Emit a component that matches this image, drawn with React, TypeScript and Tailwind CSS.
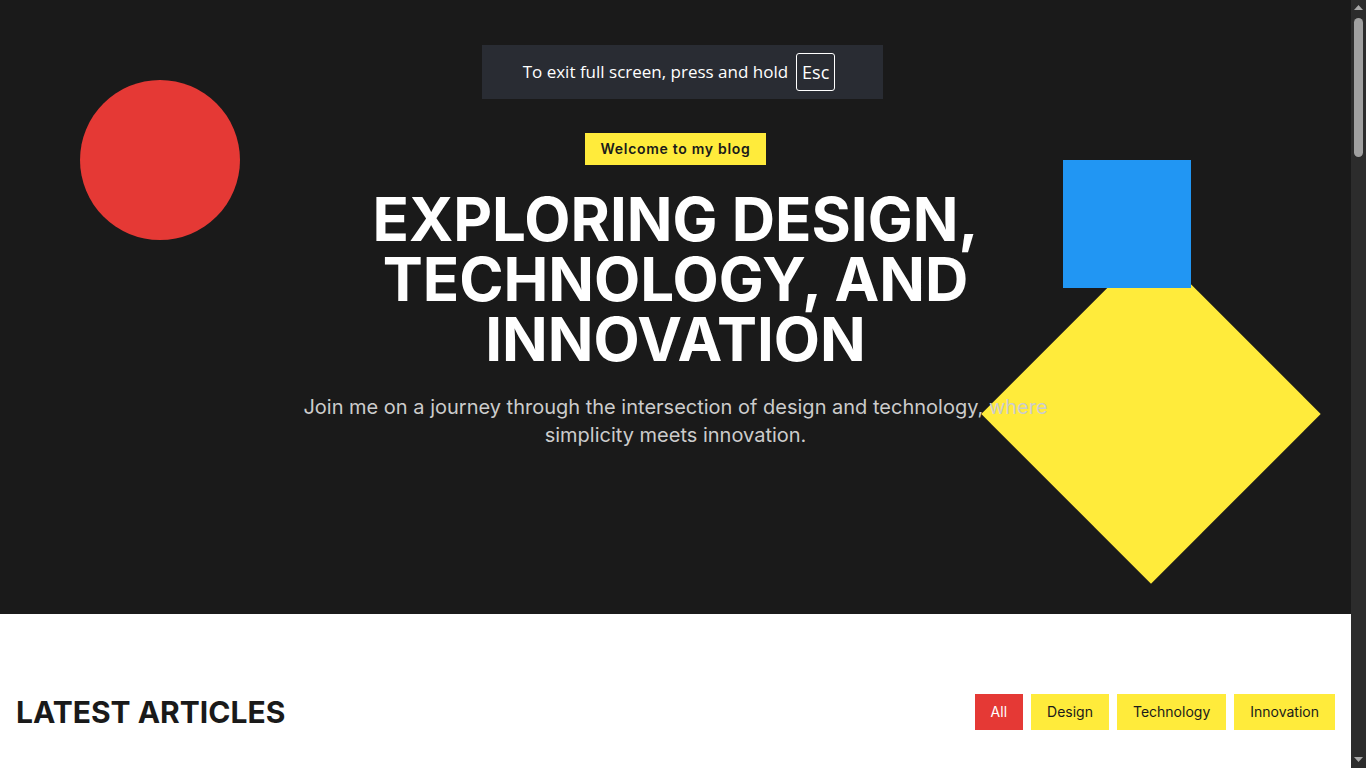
const articles = [
  { tag: "Design", title: "The Power of Simple Shapes", date: "March 12, 2024", color: "bg-[#e53935]" },
  { tag: "Technology", title: "Building Fast Interfaces", date: "March 5, 2024", color: "bg-[#2196f3]" },
  { tag: "Innovation", title: "Ideas That Change Products", date: "February 27, 2024", color: "bg-[#ffeb3b]" },
  { tag: "Design", title: "Color Theory for Developers", date: "February 20, 2024", color: "bg-[#2196f3]" },
  { tag: "Technology", title: "A Guide to Modern CSS", date: "February 13, 2024", color: "bg-[#ffeb3b]" },
  { tag: "Innovation", title: "Prototyping in a Weekend", date: "February 6, 2024", color: "bg-[#e53935]" },
  { tag: "Design", title: "Grids, Rhythm and Space", date: "January 30, 2024", color: "bg-[#ffeb3b]" },
  { tag: "Technology", title: "Why Type Systems Matter", date: "January 23, 2024", color: "bg-[#e53935]" },
  { tag: "Innovation", title: "Small Teams, Big Results", date: "January 16, 2024", color: "bg-[#2196f3]" },
];

const filters = ["All", "Design", "Technology", "Innovation"];

const App = () => {
  return (
    <div className="flex items-start bg-white font-['Inter','Liberation_Sans',sans-serif] text-[#1a1a1a]">
      <main className="min-w-0 flex-1">
        {/* hero */}
        <section className="relative h-[614px] overflow-hidden bg-[#1a1a1a] pt-[133px]">
          <div className="absolute left-[80px] top-[80px] h-[160px] w-[160px] rounded-full bg-[#e53935]" />
          <div className="absolute bottom-[80px] right-[80px] h-[240px] w-[240px] rotate-45 bg-[#ffeb3b]" />
          <div className="absolute right-[160px] top-[160px] h-[128px] w-[128px] bg-[#2196f3]" />

          <div className="flex flex-col items-center text-center">
            <span className="bg-[#ffeb3b] px-4 py-1.5 text-sm font-semibold tracking-wider text-[#1a1a1a]">
              Welcome to my blog
            </span>
            <h1 className="mt-6 max-w-3xl text-6xl leading-none font-bold text-white">
              EXPLORING DESIGN, TECHNOLOGY, AND INNOVATION
            </h1>
            <p className="relative mt-6 max-w-3xl text-xl leading-7 text-[#cccccc]">
              Join me on a journey through the intersection of design and technology, where simplicity meets
              innovation.
            </p>
          </div>

          {/* fullscreen notice */}
          <div className="absolute left-[482px] top-[45px] flex h-[54px] w-[401px] items-center justify-center gap-2 bg-[#292c33] pr-[7px] font-['Open_Sans','Noto_Sans',sans-serif] text-[17px] text-white">
            <span>To exit full screen, press and hold</span>
            <span className="flex h-[38px] items-center rounded-[3px] border border-white px-[5px] text-[18px]">
              Esc
            </span>
          </div>
        </section>

        {/* articles */}
        <section className="px-4 py-20">
          <div className="flex items-center justify-between">
            <h2 className="text-3xl font-bold">LATEST ARTICLES</h2>
            <div className="flex gap-2">
              {filters.map((f, i) => (
                <button
                  key={f}
                  className={
                    i === 0
                      ? "bg-[#e53935] px-4 py-2 text-sm text-white"
                      : "bg-[#ffeb3b] px-4 py-2 text-sm text-[#1a1a1a]"
                  }
                >
                  {f}
                </button>
              ))}
            </div>
          </div>

          <div className="mt-12 grid grid-cols-3 gap-8">
            {articles.map((a, index) => (
              <div key={index} className="border-2 border-[#1a1a1a]">
                <div className={`h-[260px] ${a.color}`} />
                <div className="p-6">
                  <span className="bg-[#1a1a1a] px-3 py-1 text-xs text-white">{a.tag}</span>
                  <h3 className="mt-4 text-2xl font-bold">{a.title}</h3>
                  <p className="mt-2 text-sm text-gray-500">{a.date}</p>
                  <p className="mt-4 text-base text-gray-700">
                    A short look at how simple ideas shape the way we build and design things every day.
                  </p>
                  <button className="mt-6 bg-[#1a1a1a] px-4 py-2 text-sm text-white">Read more</button>
                </div>
              </div>
            ))}
          </div>
        </section>

        {/* newsletter */}
        <section className="bg-[#ffeb3b] px-4 py-24 text-center">
          <h2 className="text-4xl font-bold">STAY IN THE LOOP</h2>
          <p className="mt-4 text-lg">Get new articles straight to your inbox.</p>
          <div className="mt-8 flex justify-center gap-2">
            <input className="w-[320px] border-2 border-[#1a1a1a] bg-white px-4 py-2" placeholder="Your email" />
            <button className="bg-[#1a1a1a] px-6 py-2 text-white">Subscribe</button>
          </div>
        </section>

        <footer className="bg-[#1a1a1a] px-4 py-20 text-center text-sm text-gray-400">
          © 2024 My Blog. All rights reserved.
        </footer>
      </main>

      {/* scrollbar */}
      <aside className="sticky top-0 flex h-[768px] w-[15px] shrink-0 flex-col items-center bg-[#2c2c2c]">
        <svg width="9" height="6" viewBox="0 0 9 6" className="mt-[5px]">
          <path d="M4.5 0 L9 5 L0 5 Z" fill="#a8a8a8" />
        </svg>
        <div className="mt-[7px] h-[139px] w-[9px] rounded-full bg-[#a0a0a0]" />
        <div className="flex-1" />
        <svg width="9" height="6" viewBox="0 0 9 6" className="mb-[5px]">
          <path d="M0 0 L9 0 L4.5 5 Z" fill="#a8a8a8" />
        </svg>
      </aside>
    </div>
  );
};

export default App;
